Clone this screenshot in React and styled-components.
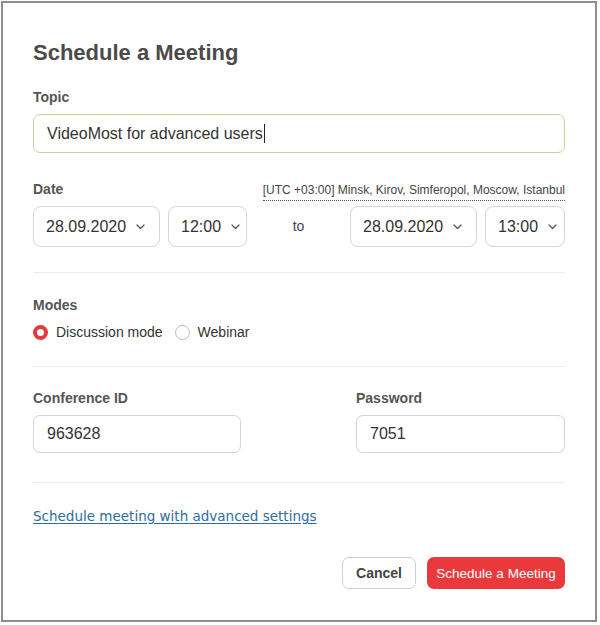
import React from 'react'
import styled, { createGlobalStyle } from 'styled-components'

const Global = createGlobalStyle`
  html, body {
    margin: 0;
    padding: 0;
    background: #fff;
  }
  body {
    font-family: 'Liberation Sans', Arial, sans-serif;
    color: #333;
  }
`

const Chevron = () => (
  <svg width='9' height='6' viewBox='0 0 9 6'>
    <polyline
      points='1,1 4.5,4.5 8,1'
      fill='none'
      stroke='#555'
      strokeWidth='1.3'
      strokeLinecap='round'
      strokeLinejoin='round'
    />
  </svg>
)

const Picker = ({ value, width }) => (
  <Select width={width}>
    <span>{value}</span>
    <Chevron />
  </Select>
)

const App = () => {
  return (
    <>
      <Global />
      <Frame>
        <Title>Schedule a Meeting</Title>

        <Label>Topic</Label>
        <TextField green>
          VideoMost for advanced users
          <Caret />
        </TextField>

        <DateHead>
          <Label>Date</Label>
          <Zone>[UTC +03:00] Minsk, Kirov, Simferopol, Moscow, Istanbul</Zone>
        </DateHead>
        <DateRow>
          <Pair>
            <Picker value='28.09.2020' width={127} />
            <Picker value='12:00' width={79} />
          </Pair>
          <To>to</To>
          <Pair>
            <Picker value='28.09.2020' width={127} />
            <Picker value='13:00' width={80} />
          </Pair>
        </DateRow>

        <Divider top={25} />

        <Label top={23}>Modes</Label>
        <Radios>
          <Option>
            <Radio checked />
            Discussion mode
          </Option>
          <Option>
            <Radio />
            Webinar
          </Option>
        </Radios>

        <Divider top={24} />

        <Columns>
          <div>
            <Label top={22}>Conference ID</Label>
            <TextField>963628</TextField>
          </div>
          <div>
            <Label top={22}>Password</Label>
            <TextField>7051</TextField>
          </div>
        </Columns>

        <Divider top={29} />

        <AdvLink href='#'>Schedule meeting with advanced settings</AdvLink>

        <Actions>
          <Cancel>Cancel</Cancel>
          <Primary>Schedule a Meeting</Primary>
        </Actions>
      </Frame>
    </>
  )
}

export default App

//styles

const Frame = styled.div`
  box-sizing: border-box;
  margin: 1px 0 0 1px;
  width: 596px;
  height: 621px;
  border: 2px solid #8e8e8e;
  padding: 37px 30px 0 30px;
  background: #fff;
`
const Title = styled.h1`
  margin: 0;
  font-size: 22px;
  line-height: 26px;
  font-weight: 700;
  color: #4b4b4b;
`
const Label = styled.div`
  margin-top: ${p => (p.top === undefined ? 22 : p.top)}px;
  font-size: 14px;
  line-height: 18px;
  font-weight: 700;
  color: #555;
`
const TextField = styled.div`
  box-sizing: border-box;
  margin-top: 8px;
  height: ${p => (p.green ? 39 : 38)}px;
  display: flex;
  align-items: center;
  padding: 0 13px;
  border: 1px solid ${p => (p.green ? '#b9d9a1' : '#d4d4d4')};
  border-radius: 7px;
  font-size: 16px;
  color: #333;
  background: #fff;
`
const Caret = styled.span`
  display: inline-block;
  width: 1px;
  height: 19px;
  margin-left: 1px;
  background: #222;
`
const DateHead = styled.div`
  display: flex;
  justify-content: space-between;
  align-items: baseline;
  height: 18px;
  margin-top: 27px;
  & > div {
    margin-top: 0;
  }
`
const Zone = styled.span`
  font-size: 12px;
  line-height: 15px;
  color: #444;
  padding-bottom: 2px;
  border-bottom: 1px dotted #555;
`
const DateRow = styled.div`
  display: flex;
  justify-content: space-between;
  align-items: center;
  margin-top: 8px;
`
const Pair = styled.div`
  display: flex;
  gap: 8px;
`
const Select = styled.div`
  box-sizing: border-box;
  width: ${p => p.width}px;
  height: 41px;
  display: flex;
  align-items: center;
  gap: 10px;
  padding: 0 0 0 12px;
  border: 1px solid #d4d4d4;
  border-radius: 8px;
  font-size: 16px;
  color: #333;
  background: #fff;
  svg {
    margin-top: 1px;
  }
`
const To = styled.span`
  font-size: 14px;
  color: #444;
  margin-top: -1px;
`
const Divider = styled.hr`
  margin: ${p => p.top}px 0 0 0;
  border: none;
  height: 1px;
  background: #ececec;
`
const Radios = styled.div`
  display: flex;
  align-items: center;
  gap: 12px;
  height: 20px;
  margin-top: 8px;
`
const Option = styled.label`
  display: flex;
  align-items: center;
  gap: 8px;
  font-size: 14px;
  color: #333;
`
const Radio = styled.span`
  box-sizing: border-box;
  width: 15px;
  height: 15px;
  border-radius: 50%;
  border: ${p => (p.checked ? '4px solid #e53a3a' : '1px solid #bdbdbd')};
  background: #fff;
`
const Columns = styled.div`
  display: grid;
  grid-template-columns: 208px 209px;
  justify-content: space-between;
`
const AdvLink = styled.a`
  display: block;
  width: max-content;
  margin-top: 24px;
  font-family: 'DejaVu Sans', Verdana, sans-serif;
  font-size: 13.5px;
  line-height: 18px;
  color: #2c6da3;
  text-decoration: underline;
  text-underline-offset: 2px;
`
const Actions = styled.div`
  display: flex;
  justify-content: flex-end;
  gap: 11px;
  margin-top: 32px;
`
const Button = styled.button`
  box-sizing: border-box;
  height: 32px;
  border-radius: 7px;
  font-family: 'Liberation Sans', Arial, sans-serif;
  cursor: pointer;
`
const Cancel = styled(Button)`
  width: 74px;
  border: 1px solid #cfcfcf;
  background: #fff;
  color: #444;
  font-size: 14px;
  font-weight: 700;
`
const Primary = styled(Button)`
  width: 138px;
  border: none;
  background: #e9393d;
  color: #fff;
  font-size: 13.5px;
  padding: 0;
`
